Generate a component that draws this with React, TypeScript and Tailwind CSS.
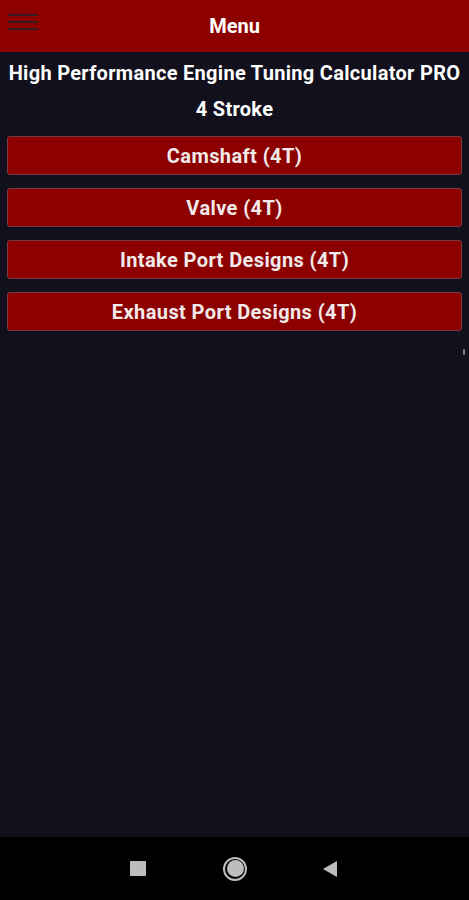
import * as React from 'react'

const items = ['Camshaft (4T)', 'Valve (4T)', 'Intake Port Designs (4T)', 'Exhaust Port Designs (4T)']

export default function App() {
  return (
    <div className="flex h-[900px] w-[469px] flex-col bg-[#11101c] font-['Roboto',sans-serif] text-white">
      <header className="relative flex h-[52px] shrink-0 items-center justify-center bg-[#8c0000]">
        <div className="absolute left-[8px] top-[14px] flex flex-col gap-[5px]">
          <span className="block h-[2px] w-[30px] bg-[#3a1a22]" />
          <span className="block h-[2px] w-[30px] bg-[#3a1a22]" />
          <span className="block h-[2px] w-[30px] bg-[#3a1a22]" />
        </div>
        <span className="text-[20px] font-bold">Menu</span>
      </header>

      <main className="relative flex flex-1 flex-col">
        <h1 className="mt-[7px] whitespace-nowrap text-center text-[20px] font-bold leading-[28px] tracking-[0.3px]">
          High Performance Engine Tuning Calculator PRO
        </h1>
        <p className="mt-[9px] text-center text-[20px] font-bold leading-[26px] tracking-[0.3px]">4 Stroke</p>

        <div className="mt-[14px] flex flex-col gap-[13px] px-[7px]">
          {items.map((t) => (
            <button
              key={t}
              className="h-[39px] w-full rounded-[3px] border border-[#7a3a40] bg-[#8c0000] text-[20px] font-bold tracking-[0.4px] text-[#f2eaea]"
            >
              {t}
            </button>
          ))}
        </div>

        <span className="absolute right-[4px] top-[297px] block h-[6px] w-[2px] rounded-full bg-[#8a8a99]" />
      </main>

      <nav className="flex h-[63px] shrink-0 items-center bg-black pl-[130px]">
        <span className="block h-[15px] w-[16px] rounded-[1px] bg-[#bdbdbd]" />
        <span className="ml-[77px] flex h-[24px] w-[24px] items-center justify-center rounded-full border-[2px] border-[#bdbdbd]">
          <span className="block h-[17px] w-[17px] rounded-full bg-[#bdbdbd]" />
        </span>
        <svg width="16" height="18" viewBox="0 0 16 18" className="ml-[75px]">
          <path d="M15 1 L1 9 L15 17 Z" fill="#bdbdbd" />
        </svg>
      </nav>
    </div>
  )
}
